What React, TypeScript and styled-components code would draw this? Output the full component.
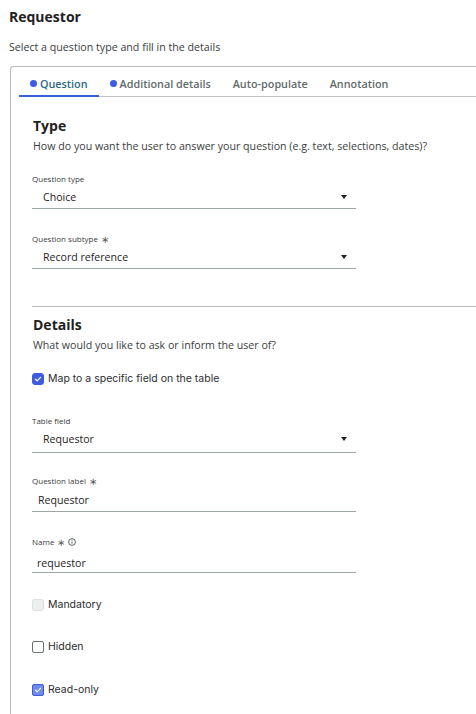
import React from "react";
import styled, { createGlobalStyle } from "styled-components";

const Global = createGlobalStyle`
  html, body { margin: 0; padding: 0; background: #ffffff; overflow: hidden; }
  body { font-family: "Open Sans", "Noto Sans", sans-serif; color: #2b2d2e; }
  * { box-sizing: border-box; }
`;

const Page = styled.div`
  width: 476px;
  height: 714px;
  overflow: hidden;
  padding: 8px 0 0 9px;
`;

const Title = styled.h1`
  margin: 0;
  font-size: 14px;
  line-height: 18px;
  font-weight: 700;
  color: #1f2222;
`;

const Subtitle = styled.p`
  margin: 14px 0 0;
  font-size: 10.65px;
  line-height: 14px;
  color: #3a3d3e;
`;

const Panel = styled.div`
  margin: 12px 0 0 1px;
  width: 500px;
  border: 1px solid #b6bcbc;
  border-right: none;
  border-bottom: none;
  border-top-left-radius: 4px;
  padding: 0 0 40px 0;
`;

const TabList = styled.div`
  display: flex;
  margin-left: 8px;
  margin-top: 8px;
  border-bottom: 1px solid #bfc5c5;
`;

const Tab = styled.div<{ $active?: boolean }>`
  display: flex;
  align-items: center;
  gap: 3px;
  height: 22px;
  padding: 0 11px 5px;
  font-size: 10.8px;
  font-weight: 600;
  color: ${(p) => (p.$active ? "#2a6a84" : "#5f6a6b")};
  box-shadow: ${(p) => (p.$active ? "inset 0 -2px 0 #3b5ce0" : "none")};
  margin-bottom: -1px;
`;

const Dot = styled.span`
  width: 7px;
  height: 7px;
  border-radius: 50%;
  background: #3d5ce0;
`;

const Content = styled.div`
  padding: 0 0 0 22px;
`;

const Section = styled.section<{ $top: number }>`
  padding-top: ${(p) => p.$top}px;
`;

const SectionTitle = styled.h2`
  margin: 0;
  font-size: 14px;
  line-height: 18px;
  font-weight: 700;
  color: #1f2222;
`;

const SectionDesc = styled.p`
  margin: 4px 0 0;
  font-size: 10.65px;
  line-height: 14px;
  color: #3a3d3e;
`;

const Divider = styled.hr`
  margin: 37px 0 0 -1px;
  border: none;
  border-top: 1px solid #b6bcbc;
`;

const Field = styled.div<{ $gap: number }>`
  width: 324px;
  margin-left: -1px;
  margin-top: ${(p) => p.$gap}px;
`;

const Label = styled.div`
  display: flex;
  align-items: center;
  gap: 3px;
  font-size: 8px;
  line-height: 10px;
  color: #3a3d3e;
`;

const Required = styled.span`
  font-size: 10px;
  color: #5a6060;
`;

const Control = styled.div<{ $h: number; $indent: number; $pt?: number }>`
  display: flex;
  align-items: center;
  justify-content: space-between;
  height: ${(p) => p.$h}px;
  padding: ${(p) => p.$pt ?? 0}px 9px 0 ${(p) => p.$indent}px;
  border-bottom: 1px solid #9ea6a6;
  font-size: 10.6px;
  color: #1f2222;
`;

const Caret = styled.span`
  width: 0;
  height: 0;
  border-left: 3.5px solid transparent;
  border-right: 3.5px solid transparent;
  border-top: 4px solid #1f2222;
`;

const CheckRow = styled.label<{ $gap: number }>`
  display: flex;
  align-items: center;
  gap: 4px;
  margin-top: ${(p) => p.$gap}px;
  margin-left: -1px;
  font-family: Inter, "Noto Sans", sans-serif;
  font-size: 10.5px;
  line-height: 14px;
  color: #2b2d2e;
`;

type BoxKind = "checked" | "disabled" | "empty" | "readonly";

const Box = styled.span<{ $kind: BoxKind }>`
  width: 12px;
  height: 12px;
  border-radius: 3px;
  display: flex;
  align-items: center;
  justify-content: center;
  ${(p) =>
    p.$kind === "checked"
      ? "background:#3d5ce0;border:1px solid #3d5ce0;"
      : p.$kind === "disabled"
      ? "background:#eef0f0;border:1px solid #dde0e0;"
      : p.$kind === "readonly"
      ? "background:#6f8ae8;border:1.5px solid #3d5ce0;border-radius:2px;"
      : "background:#fff;border:1px solid #6a7070;border-radius:2px;"}
`;

const Check = () => (
  <svg width="8" height="8" viewBox="0 0 8 8">
    <path d="M1.5 4.2 L3.2 5.8 L6.5 2.3" fill="none" stroke="#fff" strokeWidth="1.2" strokeLinecap="round" strokeLinejoin="round" />
  </svg>
);

const Info = () => (
  <svg width="8" height="8" viewBox="0 0 8 8">
    <circle cx="4" cy="4" r="3.4" fill="none" stroke="#3a3d3e" strokeWidth="0.8" />
    <path d="M4 3.5 V5.8" stroke="#3a3d3e" strokeWidth="0.8" />
    <circle cx="4" cy="2.3" r="0.5" fill="#3a3d3e" />
  </svg>
);

export default function App() {
  return (
    <>
      <Global />
      <Page>
        <Title>Requestor</Title>
        <Subtitle>Select a question type and fill in the details</Subtitle>
        <Panel>
          <TabList>
            <Tab $active>
              <Dot />
              Question
            </Tab>
            <Tab>
              <Dot />
              Additional details
            </Tab>
            <Tab>Auto-populate</Tab>
            <Tab>Annotation</Tab>
          </TabList>
          <Content>
            <Section $top={20}>
              <SectionTitle>Type</SectionTitle>
              <SectionDesc>How do you want the user to answer your question (e.g. text, selections, dates)?</SectionDesc>
              <Field $gap={21}>
                <Label>Question type</Label>
                <Control $h={25} $indent={11} $pt={1}>
                  Choice
                  <Caret />
                </Control>
              </Field>
              <Field $gap={25}>
                <Label>
                  Question subtype <Required>∗</Required>
                </Label>
                <Control $h={25} $indent={11} $pt={1}>
                  Record reference
                  <Caret />
                </Control>
              </Field>
            </Section>
            <Divider />
            <Section $top={9}>
              <SectionTitle>Details</SectionTitle>
              <SectionDesc>What would you like to ask or inform the user of?</SectionDesc>
              <CheckRow $gap={20}>
                <Box $kind="checked">
                  <Check />
                </Box>
                Map to a specific field on the table
              </CheckRow>
              <Field $gap={30}>
                <Label>Table field</Label>
                <Control $h={27} $indent={11}>
                  Requestor
                  <Caret />
                </Control>
              </Field>
              <Field $gap={23}>
                <Label>
                  Question label <Required>∗</Required>
                </Label>
                <Control $h={26} $indent={6} $pt={3}>
                  Requestor
                </Control>
              </Field>
              <Field $gap={25}>
                <Label>
                  Name <Required>∗</Required> <Info />
                </Label>
                <Control $h={26} $indent={5} $pt={6}>
                  requestor
                </Control>
              </Field>
              <CheckRow $gap={25}>
                <Box $kind="disabled" />
                Mandatory
              </CheckRow>
              <CheckRow $gap={28}>
                <Box $kind="empty" />
                Hidden
              </CheckRow>
              <CheckRow $gap={29}>
                <Box $kind="readonly">
                  <Check />
                </Box>
                Read-only
              </CheckRow>
            </Section>
          </Content>
        </Panel>
      </Page>
    </>
  );
}
